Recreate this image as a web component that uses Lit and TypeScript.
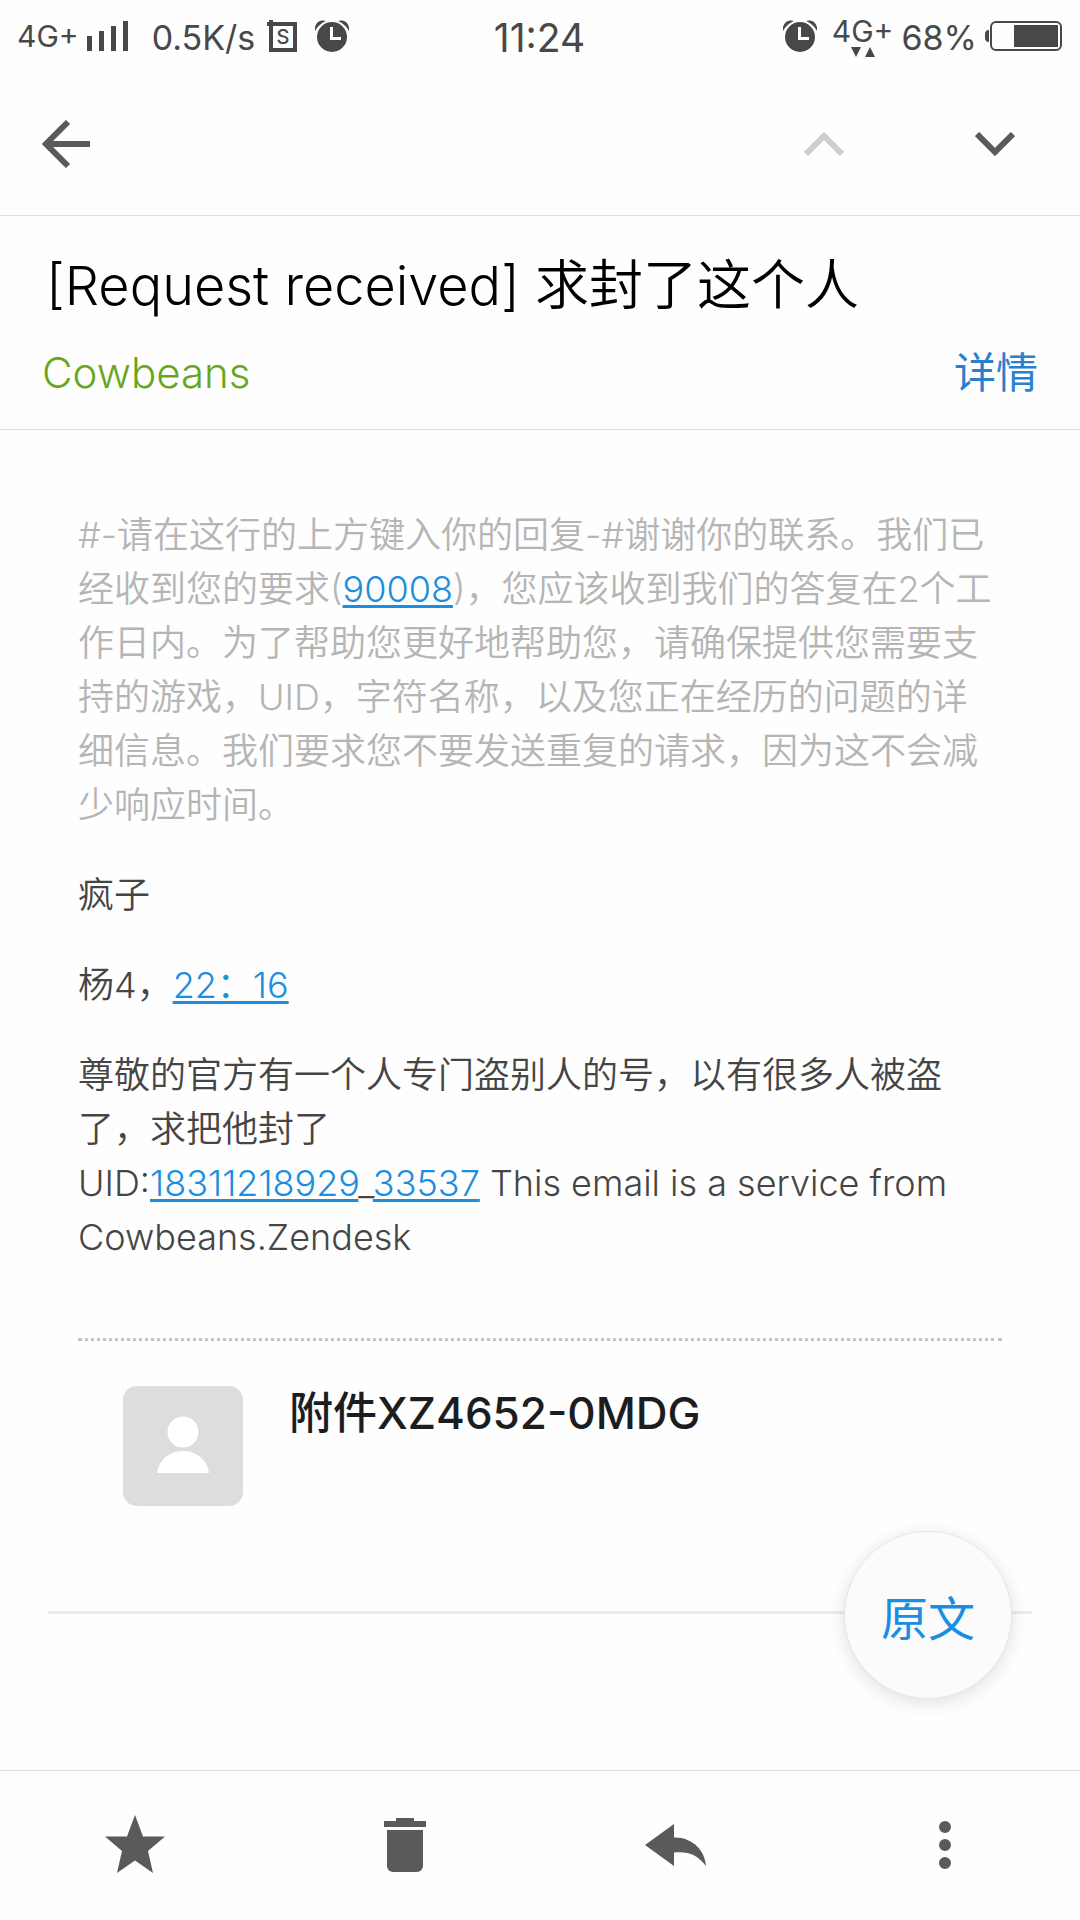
import { LitElement, html, css, svg } from "lit";
import { customElement } from "lit/decorators.js";

const alarmIcon = () => svg`
  <svg class="icon" width="34" height="33" viewBox="0 0 34 33" aria-hidden="true">
    <path d="M0 11C-1 3 5-1 11 1C6 3 3 6 0 11Z" fill="#484848" />
    <path d="M34 11C35 3 29-1 23 1C28 3 31 6 34 11Z" fill="#484848" />
    <circle cx="17" cy="17" r="15" fill="#484848" />
    <path d="M16.500 7V18.500H26" fill="none" stroke="#fff" stroke-width="3" />
  </svg>`;

@customElement("status-bar")
export class StatusBar extends LitElement {
  static styles = css`
    :host {
      display: block;
      color: #484848;
    }
    .bar {
      display: grid;
      grid-template-columns: 1fr auto 1fr;
      align-items: center;
      height: 72px;
      padding: 0 18px 0 17px;
      box-sizing: border-box;
    }
    .side {
      display: flex;
      align-items: center;
    }
    .right {
      justify-content: flex-end;
    }
    .icon {
      display: block;
      flex: none;
    }
    .network {
      font-size: 30px;
      line-height: 32px;
    }
    .signal {
      margin: 0 24px 0 8px;
    }
    .speed,
    .percent {
      font-size: 34px;
      line-height: 40px;
      padding-top: 3px;
    }
    .speed {
      margin-right: 12px;
    }
    .percent {
      margin-right: 8px;
    }
    .app {
      margin-right: 18px;
    }
    .clock {
      font-size: 39px;
      line-height: 44px;
      padding-top: 3px;
    }
    .data {
      display: flex;
      flex-direction: column;
      align-items: center;
      margin: 0 8px 0 15px;
    }
  `;

  render() {
    return html`
      <div class="bar">
        <div class="side">
          <span class="network">4G+</span>
          <svg class="icon signal" width="41" height="30" viewBox="0 0 41 30" aria-hidden="true">
            <path d="M0 15h5v15H0zM12 10h5v20h-5zM24 5h5v25h-5zM36 0h5v30h-5z" fill="#484848" />
          </svg>
          <span class="speed">0.5K/s</span>
          <svg class="icon app" width="30" height="32" viewBox="0 0 30 32" aria-hidden="true">
            <path d="M2 0h4v6H0V2h2z" fill="#484848" />
            <rect x="4" y="4" width="24" height="26" fill="none" stroke="#484848" stroke-width="4" />
            <text x="16" y="24" text-anchor="middle" font-size="20" font-weight="500" fill="#484848">S</text>
          </svg>
          ${alarmIcon()}
        </div>
        <time class="clock">11:24</time>
        <div class="side right">
          ${alarmIcon()}
          <div class="data">
            <span class="network">4G+</span>
            <svg class="icon" width="24" height="10" viewBox="0 0 24 10" aria-hidden="true">
              <path d="M0 0h10L5 10zM14 10h10L19 0z" fill="#484848" />
            </svg>
          </div>
          <span class="percent">68%</span>
          <svg class="icon" width="77" height="30" viewBox="0 0 77 30" aria-hidden="true">
            <path d="M4 9v12C1 21 0 19 0 17v-4C0 11 1 9 4 9Z" fill="#484848" />
            <rect x="6" y="1" width="70" height="28" rx="5" fill="none" stroke="#484848" stroke-width="2" />
            <rect x="29" y="4" width="44" height="22" fill="#484848" />
          </svg>
        </div>
      </div>
    `;
  }
}

@customElement("app-root")
export class AppRoot extends LitElement {
  static styles = css`
    :host {
      display: flex;
      flex-direction: column;
      min-height: 100vh;
      background: #fefefe;
      color: #454545;
      font-family: Inter, "Noto Sans CJK SC", sans-serif;
      font-weight: 400;
      text-spacing-trim: space-all;
    }
    svg {
      display: block;
      flex: none;
    }
    button {
      display: flex;
      align-items: center;
      justify-content: center;
      border: 0;
      padding: 0;
      background: none;
      color: #5a5a5a;
      font: inherit;
      cursor: pointer;
    }
    button:disabled {
      color: #cfcfcf;
      cursor: default;
    }
    .toolbar {
      display: flex;
      align-items: center;
      height: 144px;
      box-sizing: border-box;
      border-bottom: 1px solid #dfdfdf;
    }
    .tool {
      width: 171px;
      height: 96px;
    }
    .back {
      width: 132px;
      margin-right: auto;
    }
    .heading {
      border-bottom: 1px solid #dfdfdf;
      padding: 30px 42px 29px;
    }
    .subject {
      margin: 0;
      padding-left: 4px;
      font-size: 54px;
      line-height: 80px;
      font-weight: 350;
      color: #000;
    }
    .meta {
      display: flex;
      justify-content: space-between;
      align-items: center;
      margin-top: 20px;
    }
    .sender {
      color: #68a61c;
      font-size: 42px;
      line-height: 54px;
      font-weight: 300;
    }
    .details {
      color: #2a80cf;
      font-size: 42px;
      line-height: 54px;
      text-decoration: none;
    }
    .message {
      padding: 78px 78px 0;
      font-size: 36px;
      line-height: 54px;
      font-weight: 350;
    }
    .message p {
      margin: 0 0 36px;
    }
    .message a {
      color: #1a8ee0;
      text-decoration: underline;
      text-decoration-thickness: 3px;
      text-underline-offset: 3px;
      text-decoration-skip-ink: none;
    }
    .message .notice {
      color: #b5b5b5;
    }
    .attachment {
      display: flex;
      gap: 46px;
      margin: 74px 78px 0;
      padding: 45px 45px 105px;
      border-top: 3px dotted #c3c3c3;
    }
    .filename {
      margin: 0;
      font-size: 44px;
      line-height: 54px;
      font-weight: 500;
      color: #1c1d1f;
    }
    .divider {
      position: relative;
      height: 3px;
      margin: 0 48px;
      background: #ededed;
    }
    .original {
      position: absolute;
      right: 20px;
      top: -80px;
      width: 168px;
      height: 168px;
      box-sizing: border-box;
      border: 1px solid #e6e6e6;
      border-radius: 50%;
      background: #fbfbfb;
      box-shadow: 0 4px 18px rgba(0, 0, 0, 0.12);
      color: #1a8ee0;
      font-size: 47px;
    }
    .actions {
      display: grid;
      grid-template-columns: repeat(4, 1fr);
      height: 150px;
      box-sizing: border-box;
      margin-top: auto;
      padding-bottom: 2px;
      border-top: 1px solid #dfdfdf;
    }
  `;

  render() {
    return html`
      <status-bar></status-bar>
      <header class="toolbar">
        <button class="tool back" aria-label="返回">
          <svg width="48" height="48" viewBox="0 0 48 48">
            <path d="M26 2L4 24L26 46M4 24H48" fill="none" stroke="currentColor" stroke-width="6" />
          </svg>
        </button>
        <button class="tool" aria-label="上一封" disabled>
          <svg width="40" height="24" viewBox="0 0 40 24">
            <path d="M2 22L20 4L38 22" fill="none" stroke="currentColor" stroke-width="6" />
          </svg>
        </button>
        <button class="tool" aria-label="下一封">
          <svg width="40" height="24" viewBox="0 0 40 24">
            <path d="M2 2L20 20L38 2" fill="none" stroke="currentColor" stroke-width="6" />
          </svg>
        </button>
      </header>

      <section class="heading">
        <h1 class="subject">[Request received] 求封了这个人</h1>
        <div class="meta">
          <span class="sender">Cowbeans</span>
          <a class="details" href="#details">详情</a>
        </div>
      </section>

      <main>
        <article class="message">
          <p class="notice">#-请在这行的上方键入你的回复-#谢谢你的联系。我们已经收到您的要求(<a href="#90008">90008</a>)，您应该收到我们的答复在2个工作日内。为了帮助您更好地帮助您，请确保提供您需要支持的游戏，UID，字符名称，以及您正在经历的问题的详细信息。我们要求您不要发送重复的请求，因为这不会减少响应时间。</p>
          <p>疯子</p>
          <p>杨4，<a href="#time">22：16</a></p>
          <p>尊敬的官方有一个人专门盗别人的号，以有很多人被盗了，求把他封了<br />UID:<a href="tel:18311218929">18311218929</a>_<a href="tel:33537">33537</a> This email is a service from Cowbeans.Zendesk</p>
        </article>
        <section class="attachment">
          <svg width="120" height="120" viewBox="0 0 120 120" aria-hidden="true">
            <rect width="120" height="120" rx="14" fill="#ddd" />
            <circle cx="60" cy="46" r="15.500" fill="#fff" />
            <path d="M34 87C36 73 47 65 60 65S84 73 86 87Z" fill="#fff" />
          </svg>
          <h2 class="filename">附件XZ4652-0MDG</h2>
        </section>
        <div class="divider">
          <button class="original">原文</button>
        </div>
      </main>

      <nav class="actions">
        <button aria-label="星标">
          <svg width="60" height="60" viewBox="0 0 60 60">
            <path d="M30 0L38 21.500H60L43 36L48 58L30 45.500L12 58L17 36L0 21.500H22Z" fill="currentColor" />
          </svg>
        </button>
        <button aria-label="删除">
          <svg width="42" height="54" viewBox="0 0 42 54">
            <path d="M12 0H30V3H42V9H0V3H12ZM3 12H39V48A6 6 0 0 1 33 54H9A6 6 0 0 1 3 48Z" fill="currentColor" />
          </svg>
        </button>
        <button aria-label="回复">
          <svg width="61" height="42" viewBox="0 0 61 42">
            <path d="M0 21L29 0V13.500C48 13 60 27 61 42C53 31 43 27 29 28.500V42Z" fill="currentColor" />
          </svg>
        </button>
        <button aria-label="更多">
          <svg width="12" height="48" viewBox="0 0 12 48">
            <path d="M6 0a6 6 0 1 1 0 12a6 6 0 1 1 0-12M6 18a6 6 0 1 1 0 12a6 6 0 1 1 0-12M6 36a6 6 0 1 1 0 12a6 6 0 1 1 0-12" fill="currentColor" />
          </svg>
        </button>
      </nav>
    `;
  }
}
